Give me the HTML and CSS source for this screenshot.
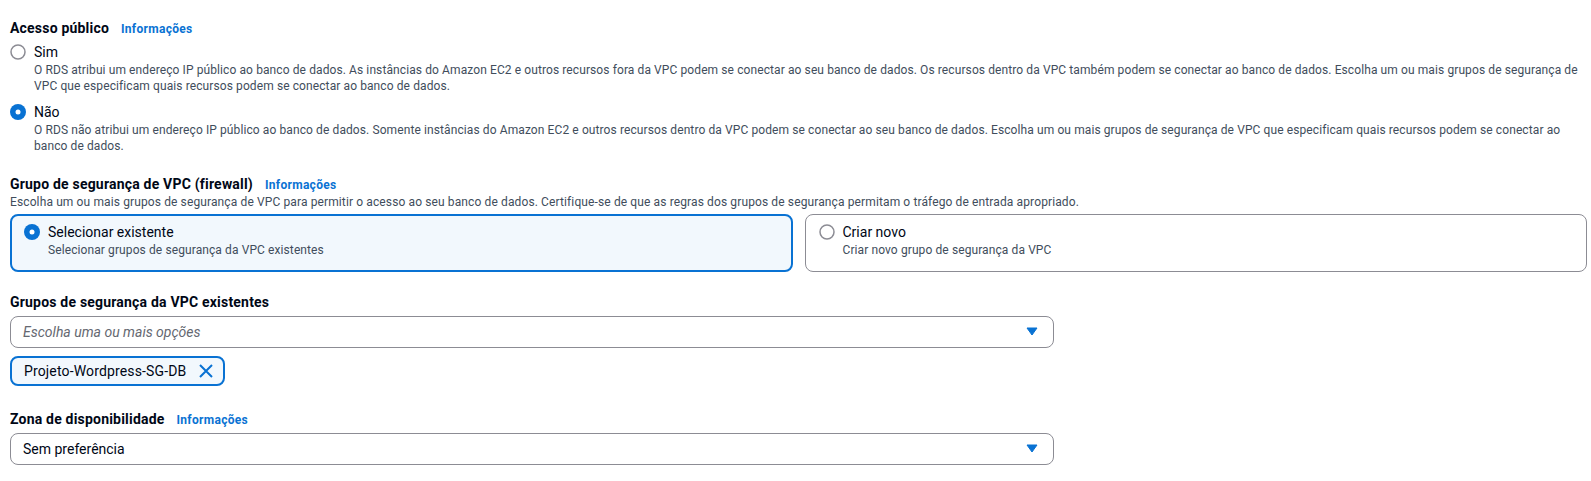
FILE: index.html
```html
<!DOCTYPE html>
<html lang="pt-BR">
<head>
<meta charset="utf-8">
<title>RDS</title>
<link rel="stylesheet" href="styles.css">
</head>
<body>
<div class="page">
  <section class="field field-access">
    <div class="label-row"><span class="label">Acesso público</span><a class="info">Informações</a></div>
    <div class="radio-group">
      <div class="radio-item">
        <span class="radio-ctl"><svg width="16" height="16" viewBox="0 0 16 16"><circle cx="8" cy="8" r="7" fill="#fff" stroke="#8c8c94" stroke-width="1.5"/></svg></span>
        <div class="radio-body">
          <div class="radio-label">Sim</div>
          <div class="radio-desc">O RDS atribui um endereço IP público ao banco de dados. As instâncias do Amazon EC2 e outros recursos fora da VPC podem se conectar ao seu banco de dados. Os recursos dentro da VPC também podem se conectar ao banco de dados. Escolha um ou mais grupos de segurança de VPC que especificam quais recursos podem se conectar ao banco de dados.</div>
        </div>
      </div>
      <div class="radio-item">
        <span class="radio-ctl"><svg width="16" height="16" viewBox="0 0 16 16"><circle cx="8" cy="8" r="8" fill="#0972d3"/><circle cx="8" cy="8" r="2.5" fill="#fff"/></svg></span>
        <div class="radio-body">
          <div class="radio-label">Não</div>
          <div class="radio-desc">O RDS não atribui um endereço IP público ao banco de dados. Somente instâncias do Amazon EC2 e outros recursos dentro da VPC podem se conectar ao seu banco de dados. Escolha um ou mais grupos de segurança de VPC que especificam quais recursos podem se conectar ao banco de dados.</div>
        </div>
      </div>
    </div>
  </section>

  <section class="field field-vpc">
    <div class="label-row"><span class="label">Grupo de segurança de VPC (firewall)</span><a class="info">Informações</a></div>
    <div class="field-desc">Escolha um ou mais grupos de segurança de VPC para permitir o acesso ao seu banco de dados. Certifique-se de que as regras dos grupos de segurança permitam o tráfego de entrada apropriado.</div>
    <div class="tiles">
      <div class="tile tile-selected">
        <span class="radio-ctl"><svg width="16" height="16" viewBox="0 0 16 16"><circle cx="8" cy="8" r="8" fill="#0972d3"/><circle cx="8" cy="8" r="2.5" fill="#fff"/></svg></span>
        <div class="radio-body">
          <div class="radio-label">Selecionar existente</div>
          <div class="radio-desc">Selecionar grupos de segurança da VPC existentes</div>
        </div>
      </div>
      <div class="tile">
        <span class="radio-ctl"><svg width="16" height="16" viewBox="0 0 16 16"><circle cx="8" cy="8" r="7" fill="#fff" stroke="#8c8c94" stroke-width="1.5"/></svg></span>
        <div class="radio-body">
          <div class="radio-label">Criar novo</div>
          <div class="radio-desc">Criar novo grupo de segurança da VPC</div>
        </div>
      </div>
    </div>
  </section>

  <section class="field field-groups">
    <div class="label-row"><span class="label">Grupos de segurança da VPC existentes</span></div>
    <div class="select">
      <span class="placeholder">Escolha uma ou mais opções</span>
      <svg class="caret" width="12" height="10" viewBox="0 0 12 10"><path d="M1 1 L11 1 L6 8 Z" fill="#0972d3" stroke="#0972d3" stroke-width="1" stroke-linejoin="round"/></svg>
    </div>
    <div class="tokens">
      <div class="token">
        <span class="token-text">Projeto-Wordpress-SG-DB</span>
        <svg class="token-x" width="16" height="16" viewBox="0 0 16 16"><path d="M2 2 L14 14 M14 2 L2 14" stroke="#0972d3" stroke-width="2" fill="none"/></svg>
      </div>
    </div>
  </section>

  <section class="field field-zone">
    <div class="label-row"><span class="label">Zona de disponibilidade</span><a class="info">Informações</a></div>
    <div class="select">
      <span class="value">Sem preferência</span>
      <svg class="caret" width="12" height="10" viewBox="0 0 12 10"><path d="M1 1 L11 1 L6 8 Z" fill="#0972d3" stroke="#0972d3" stroke-width="1" stroke-linejoin="round"/></svg>
    </div>
  </section>
</div>
</body>
</html>
```

FILE: styles.css
```css
* { box-sizing: border-box; }
html, body { margin: 0; padding: 0; background: #fff; }
body {
  font-family: Roboto, "Liberation Sans", sans-serif;
  color: #000716;
  font-size: 14px;
  line-height: 20px;
}
.page {
  padding: 17px 4px 0 10px;
  display: flex;
  flex-direction: column;
}
.field { display: flex; flex-direction: column; }
.field-vpc { margin-top: 19px; }
.field-groups { margin-top: 19px; }
.field-zone { margin-top: 22px; }

.label-row { display: flex; align-items: baseline; gap: 12px; padding-top: 1px; }
.label { font-weight: 700; font-size: 14px; line-height: 20px; letter-spacing: 0.2px; }
.info { color: #0972d3; font-weight: 700; font-size: 12px; line-height: 16px; letter-spacing: 0.3px; cursor: pointer; }

.radio-group { display: flex; flex-direction: column; gap: 8px; margin-top: 4px; }
.radio-item { display: flex; gap: 8px; align-items: flex-start; }
.radio-ctl { flex: none; height: 20px; width: 16px; display: flex; align-items: center; }
.radio-ctl svg { display: block; }
.radio-body { display: flex; flex-direction: column; min-width: 0; }
.radio-label { font-size: 14px; line-height: 20px; }
.radio-desc { font-size: 12px; line-height: 16px; color: #414d5c; letter-spacing: 0.1px; }

.field-desc { font-size: 12px; line-height: 16px; color: #414d5c; letter-spacing: 0.12px; }

.tiles {
  margin-top: 4px;
  display: grid;
  grid-template-columns: 1fr 1fr;
  gap: 12px;
}
.tile {
  display: flex;
  gap: 8px;
  align-items: flex-start;
  border: 1px solid #8c8c94;
  border-radius: 8px;
  padding: 7px 12px 13px 13px;
  min-height: 58px;
}
.tile-selected {
  border: 2px solid #0972d3;
  background: #f2f8fd;
  padding: 6px 11px 12px 12px;
}

.select {
  margin-top: 4px;
  width: 1044px;
  height: 32px;
  border: 1px solid #8c8c94;
  border-radius: 8px;
  display: flex;
  align-items: center;
  justify-content: space-between;
  padding: 0 15px 0 12px;
}
.placeholder { font-style: italic; color: #656871; }
.value { color: #000716; }
.caret { display: block; }

.tokens { margin-top: 8px; display: flex; }
.token {
  display: flex;
  align-items: center;
  gap: 11px;
  height: 30px;
  border: 2px solid #0972d3;
  border-radius: 8px;
  background: #f2f8fd;
  padding: 0 9px 0 12px;
}
.token-text { font-size: 14px; line-height: 20px; letter-spacing: 0.15px; }
.token-x { display: block; }
```
